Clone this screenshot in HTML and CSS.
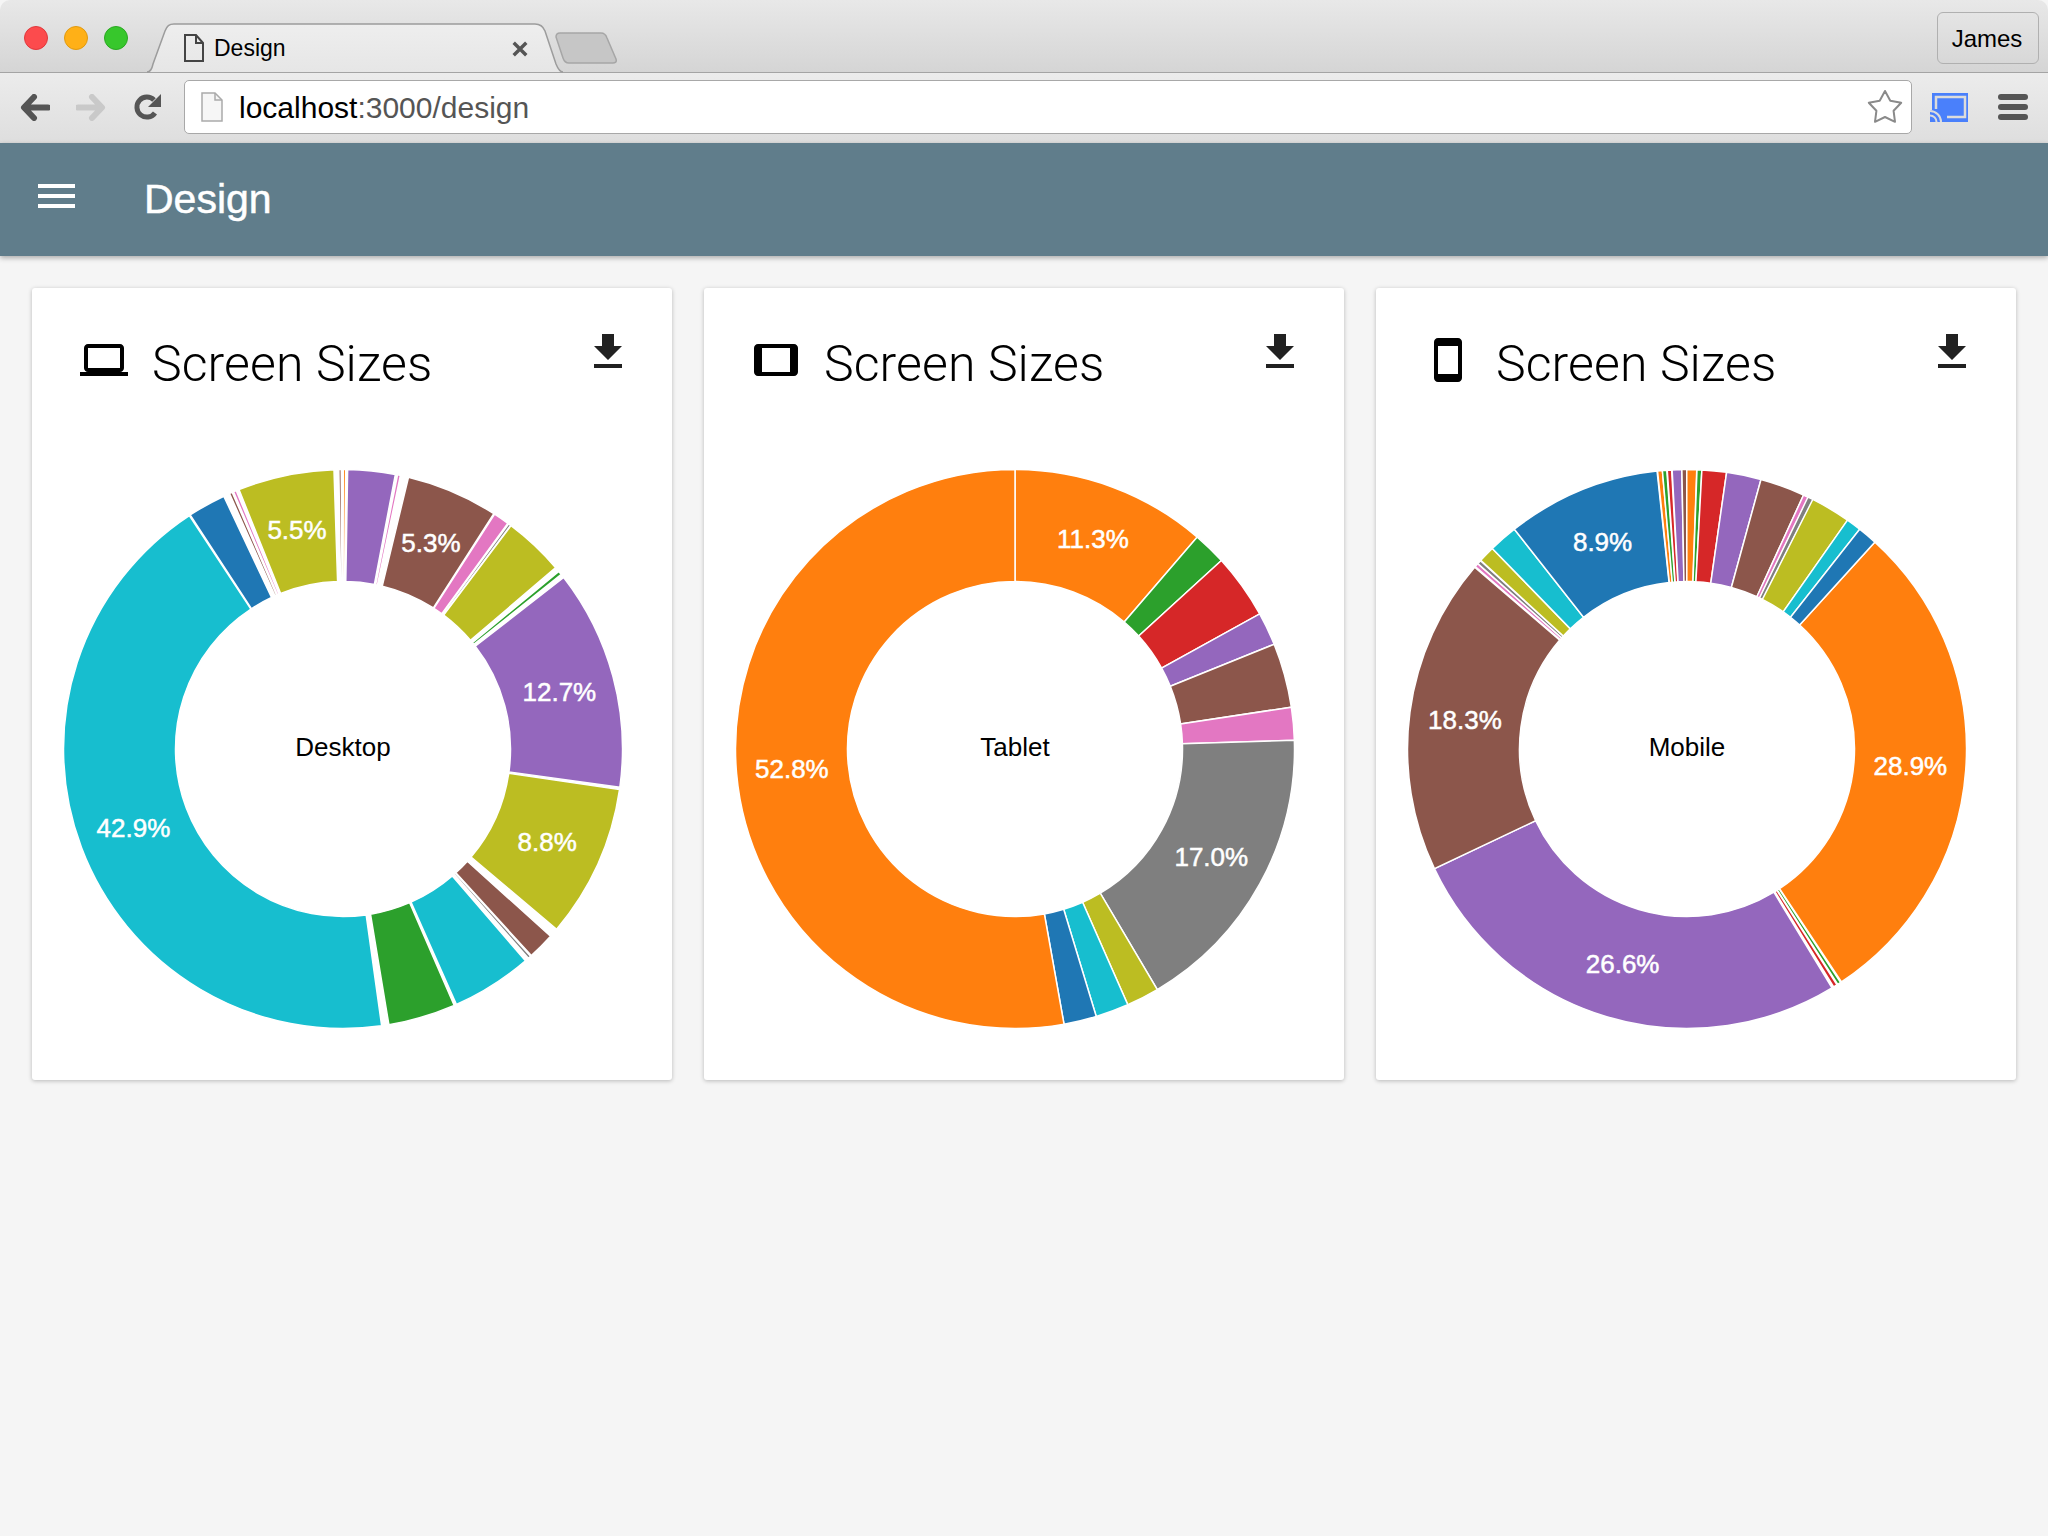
FILE: index.html
```html
<!DOCTYPE html>
<html lang="en">
<head>
  <meta charset="UTF-8" />
  <title>Design</title>
  <link rel="stylesheet" href="styles.css">
</head>
<body>

  <header class="browser">
    <div class="tabstrip">
      <div class="lights">
        <span class="light red"></span>
        <span class="light amber"></span>
        <span class="light green"></span>
      </div>
      <div class="tab">
        <svg class="tab-shape" viewBox="0 0 416 50" preserveAspectRatio="none">
          <defs>
            <linearGradient id="tabFill" x1="0" y1="0" x2="0" y2="1">
              <stop offset="0" stop-color="#eeeeee" />
              <stop offset="1" stop-color="#e6e6e6" />
            </linearGradient>
          </defs>
          <path d="M0 49 C3 49 5 46 6 41 L18 8 C20 3 22 1 27 1 H388 C393 1 396 3 398 8 L409 41 C411 46 413 49 416 49" fill="url(#tabFill)" stroke="#9c9c9c" stroke-width="1.5" />
        </svg>
        <svg class="tab-page" viewBox="0 0 20 28">
          <path d="M1 1 H12 L19 9 V27 H1 Z M12 1 V9 H19" fill="none" stroke="#444" stroke-width="2" />
        </svg>
        <span class="tab-title">Design</span>
        <svg class="tab-close" viewBox="0 0 14 14">
          <path d="M1.500 1.500 L12.500 12.500 M12.500 1.500 L1.500 12.500" stroke="#555" stroke-width="3" />
        </svg>
      </div>
      <svg class="newtab" viewBox="0 0 62 32">
        <path d="M1 5 C1 2 3 1 5 1 H46 C49 1 51 3 52 6 L61 27 C62 30 60 31 58 31 H14 C11 31 9 29 8 26 Z" fill="#c6c6c6" stroke="#a6a6a6" stroke-width="1.5" />
      </svg>
      <div class="profile">James</div>
    </div>

    <div class="toolbar">
      <svg class="nav-back" viewBox="0 0 30 27">
        <path d="M28 13.5 H7 M14 3 L4 13.5 L14 24" fill="none" stroke="#555" stroke-width="6" stroke-linecap="round" stroke-linejoin="round" />
      </svg>
      <svg class="nav-forward" viewBox="0 0 30 27">
        <path d="M2 13.5 H23 M16 3 L26 13.5 L16 24" fill="none" stroke="#c9c9c9" stroke-width="6" stroke-linecap="round" stroke-linejoin="round" />
      </svg>
      <svg class="nav-reload" viewBox="0 0 27 27">
        <path d="M21 19 A10 10 0 1 1 20 6" fill="none" stroke="#555" stroke-width="5" />
        <path d="M27 0 V13 H14 Z" fill="#555" />
      </svg>
      <div class="omnibox">
        <svg class="omni-page" viewBox="0 0 22 30">
          <path d="M1 1 H14 L21 8 V29 H1 Z" fill="#f6f6f6" stroke="#aaa" stroke-width="1.5" />
          <path d="M14 1 V8 H21" fill="none" stroke="#aaa" stroke-width="1.5" />
        </svg>
        <span class="url"><b>localhost</b>:3000/design</span>
        <svg class="star" viewBox="0 0 36 36">
          <polygon points="18,2 23.3,11.7 34.2,13.7 26.6,21.8 28,32.8 18,28 8,32.8 9.4,21.8 1.8,13.7 12.7,11.7" fill="#fff" stroke="#8a8a8a" stroke-width="2" stroke-linejoin="round" />
        </svg>
      </div>
      <svg class="cast" viewBox="0 0 38 29">
        <rect x="2" width="36" height="29" fill="#4a80fb" />
        <rect x="0" y="17" width="16" height="12" fill="#4a80fb" />
        <path d="M6 16 V4 H35 V24 H17" fill="none" stroke="#dcdcdc" stroke-width="2.5" />
        <path d="M0 18 A11 11 0 0 1 11 29 M0 22.5 A6.5 6.5 0 0 1 6.500 29" fill="none" stroke="#dcdcdc" stroke-width="2" />
      </svg>
      <div class="menu">
        <span></span>
        <span></span>
        <span></span>
      </div>
    </div>
  </header>

  <div class="appbar">
    <div class="burger">
      <span></span>
      <span></span>
      <span></span>
    </div>
    <h1 class="appbar-title">Design</h1>
  </div>

  <main class="cards">
    <section class="card">
      <div class="card-head">
        <svg class="card-icon" viewBox="0 0 24 24">
          <path d="M20 18c1.100 0 1.990-.9 1.990-2L22 6c0-1.100-.9-2-2-2H4c-1.100 0-2 .9-2 2v10c0 1.100.9 2 2 2H0v2h24v-2h-4zM4 6h16v10H4V6z" />
        </svg>
        <h2 class="card-title">Screen Sizes</h2>
        <svg class="download" viewBox="0 0 24 24">
          <path d="M19 9h-4V3H9v6H5l7 7 7-7zM5 18v2h14v-2H5z" />
        </svg>
      </div>
      <svg class="donut" id="desktop" viewBox="-311 -311 622 622"></svg>
    </section>

    <section class="card">
      <div class="card-head">
        <svg class="card-icon" viewBox="0 0 24 24">
          <path d="M21 4H3c-1.100 0-2 .9-2 2v12c0 1.100.9 2 2 2h18c1.100 0 1.990-.9 1.990-2L23 6c0-1.100-.9-2-2-2zm-2 14H5V6h14v12z" />
        </svg>
        <h2 class="card-title">Screen Sizes</h2>
        <svg class="download" viewBox="0 0 24 24">
          <path d="M19 9h-4V3H9v6H5l7 7 7-7zM5 18v2h14v-2H5z" />
        </svg>
      </div>
      <svg class="donut" id="tablet" viewBox="-311 -311 622 622"></svg>
    </section>

    <section class="card">
      <div class="card-head">
        <svg class="card-icon" viewBox="0 0 24 24">
          <path d="M17 1.010L7 1c-1.100 0-2 .9-2 2v18c0 1.100.9 2 2 2h10c1.100 0 2-.9 2-2V3c0-1.100-.9-1.990-2-1.990zM17 19H7V5h10v14z" />
        </svg>
        <h2 class="card-title">Screen Sizes</h2>
        <svg class="download" viewBox="0 0 24 24">
          <path d="M19 9h-4V3H9v6H5l7 7 7-7zM5 18v2h14v-2H5z" />
        </svg>
      </div>
      <svg class="donut" id="mobile" viewBox="-311 -311 622 622"></svg>
    </section>
  </main>

  <script src="charts.js"></script>
</body>
</html>
```

FILE: styles.css
```css
* {
  box-sizing: border-box;
}

body {
  margin: 0;
  min-height: 100vh;
  background: #f5f5f5;
  font-family: "Liberation Sans", Arial, sans-serif;
  color: #000;
}

/* browser window */
.browser {
  height: 143px;
  border-radius: 10px 10px 0 0;
  overflow: hidden;
}

.tabstrip {
  display: flex;
  height: 73px;
  padding-left: 24px;
  background: linear-gradient(#e8e8e8, #d5d5d5);
  border-bottom: 1.5px solid #a4a4a4;
}

.lights {
  display: flex;
  gap: 16px;
  margin-top: 26px;
}

.light {
  width: 24px;
  height: 24px;
  border-radius: 50%;
}

.light.red { background: #fc4b4d; border: 1px solid #e0383c; }
.light.amber { background: #ffb017; border: 1px solid #e09a10; }
.light.green { background: #37c72c; border: 1px solid #2aa822; }

.tab {
  position: relative;
  display: flex;
  align-items: flex-start;
  width: 416px;
  height: 50px;
  margin: 23px 0 0 19px;
  padding: 11px 35px 0 37px;
}

.tab-shape {
  position: absolute;
  left: 0;
  top: 0;
  width: 100%;
  height: 100%;
}

.tab-page {
  position: relative;
  width: 20px;
  height: 28px;
}

.tab-title {
  position: relative;
  margin-left: 10px;
  font-size: 23px;
  line-height: 28px;
}

.tab-close {
  position: relative;
  width: 16px;
  height: 16px;
  margin: 7px 0 0 auto;
}

.newtab {
  width: 62px;
  height: 32px;
  margin: 32px 0 0 -8px;
}

.profile {
  width: 102px;
  height: 52px;
  margin: 12px 9px 0 auto;
  padding-right: 2px;
  border: 1.5px solid #b0b0b0;
  border-radius: 6px;
  font-size: 24px;
  line-height: 51px;
  text-align: center;
}

.toolbar {
  display: flex;
  align-items: center;
  height: 70px;
  padding: 0 20px 2px;
  background: linear-gradient(#ececec, #dedede);
}

.nav-back,
.nav-forward {
  width: 30px;
  height: 27px;
}

.nav-forward {
  margin-left: 26px;
}

.nav-reload {
  width: 27px;
  height: 27px;
  margin-left: 28px;
}

.omnibox {
  display: flex;
  align-items: center;
  width: 1728px;
  height: 54px;
  margin-left: 23px;
  padding: 0 8px 0 16px;
  background: #fff;
  border: 1.5px solid #a8a8a8;
  border-radius: 5px;
  font-size: 30px;
  color: #555;
}

.omni-page {
  width: 22px;
  height: 30px;
}

.url {
  margin-left: 16px;
  padding-top: 2px;
}

.url b {
  font-weight: 400;
  color: #000;
}

.star {
  width: 36px;
  height: 36px;
  margin-left: auto;
}

.cast {
  width: 38px;
  height: 29px;
  margin-left: 18px;
}

.menu {
  display: flex;
  flex-direction: column;
  gap: 4px;
  width: 30px;
  margin-left: 30px;
}

.menu span {
  height: 6px;
  background: #555;
  border-radius: 3px;
}

/* app */
.appbar {
  position: relative;
  display: flex;
  align-items: center;
  height: 113px;
  padding-left: 38px;
  background: #607d8b;
  box-shadow: 0 2px 5px rgba(0, 0, 0, 0.3);
}

.burger {
  display: flex;
  flex-direction: column;
  gap: 6px;
  width: 37px;
  margin-bottom: 7px;
}

.burger span {
  height: 4px;
  background: #fff;
}

.appbar-title {
  margin: 0 0 0 69px;
  font-size: 41px;
  font-weight: 400;
  color: #fff;
  -webkit-text-stroke: 0.5px #fff;
}

.cards {
  display: grid;
  grid-template-columns: repeat(3, 640px);
  gap: 32px;
  padding: 32px;
}

.card {
  height: 792px;
  background: #fff;
  border-radius: 3px;
  box-shadow: 0 1px 4px rgba(0, 0, 0, 0.25);
}

.card-head {
  display: flex;
  align-items: flex-start;
  height: 150px;
  padding: 40px 40px 0 48px;
}

.card-icon {
  width: 48px;
  height: 48px;
  margin-top: 8px;
}

.card-title {
  margin: 8px 0 0 24px;
  font-family: Roboto, "Liberation Sans", sans-serif;
  font-size: 50px;
  line-height: 56px;
  font-weight: 300;
  letter-spacing: 0.1px;
}

.download {
  width: 48px;
  height: 48px;
  margin-left: auto;
  fill: #212121;
}

.donut {
  display: block;
  width: 622px;
  height: 622px;
}

.slice {
  stroke: #fff;
  stroke-width: 1.5;
}

.blue { fill: #1f77b4; }
.orange { fill: #ff7f0e; }
.green { fill: #2ca02c; }
.red { fill: #d62728; }
.purple { fill: #9467bd; }
.brown { fill: #8c564b; }
.pink { fill: #e377c2; }
.gray { fill: #7f7f7f; }
.olive { fill: #bcbd22; }
.cyan { fill: #17becf; }

.slice-label {
  font-size: 26px;
  fill: #fff;
  stroke: #fff;
  stroke-width: 0.5;
  text-anchor: middle;
}

.center-label {
  font-size: 26px;
  fill: #000;
  text-anchor: middle;
}
```

FILE: charts.js
```js
// outer and inner radius of the rings
const R = 279.5;
const r = 167.5;
const LABEL_R = 224;

// [start angle, end angle, colour, label], degrees clockwise from the top
const charts = {
  desktop: {
    name: 'Desktop',
    slices: [
      [1.1, 10.65, 'purple'],
      [11.4, 11.7, 'pink'],
      [13.7, 32.5, 'brown', '5.3%'],
      [33, 36, 'pink'],
      [36.5, 36.7, 'gray'],
      [37.1, 49.4, 'olive'],
      [50.7, 51.2, 'green'],
      [52.3, 97.7, 'purple', '12.7%'],
      [98.5, 130, 'olive', '8.8%'],
      [132.2, 137.5, 'brown'],
      [138, 138.3, 'gray'],
      [139.4, 155.9, 'cyan'],
      [156.7, 170.4, 'green'],
      [172.2, 326.5, 'cyan', '42.9%'],
      [327, 334.6, 'blue'],
      [336.2, 336.5, 'brown'],
      [337.1, 337.4, 'pink'],
      [338.3, 358, 'olive', '5.5%'],
      [359.3, 359.5, 'brown'],
      [0.2, 0.4, 'orange']
    ]
  },
  tablet: {
    name: 'Tablet',
    slices: [
      [0.15, 40.55, 'orange', '11.3%'],
      [40.85, 47.45, 'green'],
      [47.75, 60.95, 'red'],
      [61.25, 67.85, 'purple'],
      [68.15, 81.25, 'brown'],
      [81.55, 88.05, 'pink'],
      [88.35, 149.25, 'gray', '17.0%'],
      [149.55, 156.05, 'olive'],
      [156.35, 162.95, 'cyan'],
      [163.25, 169.75, 'blue'],
      [170.05, 359.85, 'orange', '52.8%']
    ]
  },
  mobile: {
    name: 'Mobile',
    slices: [
      [42.4, 146.3, 'orange', '28.9%'],
      [146.8, 147.2, 'green'],
      [147.7, 148.2, 'red'],
      [148.9, 244.5, 'purple', '26.6%'],
      [244.8, 310.4, 'brown', '18.3%'],
      [310.9, 311.4, 'pink'],
      [311.7, 312.2, 'gray'],
      [312.6, 315.7, 'olive'],
      [316, 321.7, 'cyan'],
      [322, 353.7, 'blue', '8.9%'],
      [354.1, 354.8, 'orange'],
      [355.1, 355.7, 'green'],
      [356.1, 356.7, 'red'],
      [357.1, 358.8, 'purple'],
      [359.1, 359.8, 'brown'],
      [0.1, 1.85, 'orange'],
      [2.2, 2.9, 'green'],
      [3.2, 8, 'red'],
      [8.3, 15.2, 'purple'],
      [15.5, 24.5, 'brown'],
      [24.8, 25.6, 'pink'],
      [25.8, 26.7, 'gray'],
      [26.9, 34.9, 'olive'],
      [35.2, 38, 'cyan'],
      [38.3, 42.1, 'blue']
    ]
  }
};

const SVG_NS = 'http://www.w3.org/2000/svg';

function point(radius, deg) {
  const a = deg * Math.PI / 180;
  return (radius * Math.sin(a)).toFixed(2) + ' ' + (-radius * Math.cos(a)).toFixed(2);
}

function arcPath(start, end) {
  // the white stroke eats into each slice, so push the edges out a little
  const a0 = start - 0.15;
  const a1 = end + 0.15;
  const large = a1 - a0 > 180 ? 1 : 0;
  return 'M' + point(R, a0) +
    'A' + R + ' ' + R + ' 0 ' + large + ' 1 ' + point(R, a1) +
    'L' + point(r, a1) +
    'A' + r + ' ' + r + ' 0 ' + large + ' 0 ' + point(r, a0) + 'Z';
}

function addText(svg, className, x, y, text) {
  const t = document.createElementNS(SVG_NS, 'text');
  t.setAttribute('class', className);
  t.setAttribute('x', x);
  t.setAttribute('y', y);
  t.textContent = text;
  svg.appendChild(t);
}

Object.keys(charts).forEach(id => {
  const svg = document.getElementById(id);

  charts[id].slices.forEach(s => {
    const path = document.createElementNS(SVG_NS, 'path');
    path.setAttribute('class', 'slice ' + s[2]);
    path.setAttribute('d', arcPath(s[0], s[1]));
    svg.appendChild(path);
  });

  charts[id].slices.filter(s => s[3]).forEach(s => {
    const mid = (s[0] + s[1]) / 2 * Math.PI / 180;
    addText(svg, 'slice-label', LABEL_R * Math.sin(mid), -LABEL_R * Math.cos(mid) + 9.5, s[3]);
  });

  addText(svg, 'center-label', 0, 7, charts[id].name);
});
```
